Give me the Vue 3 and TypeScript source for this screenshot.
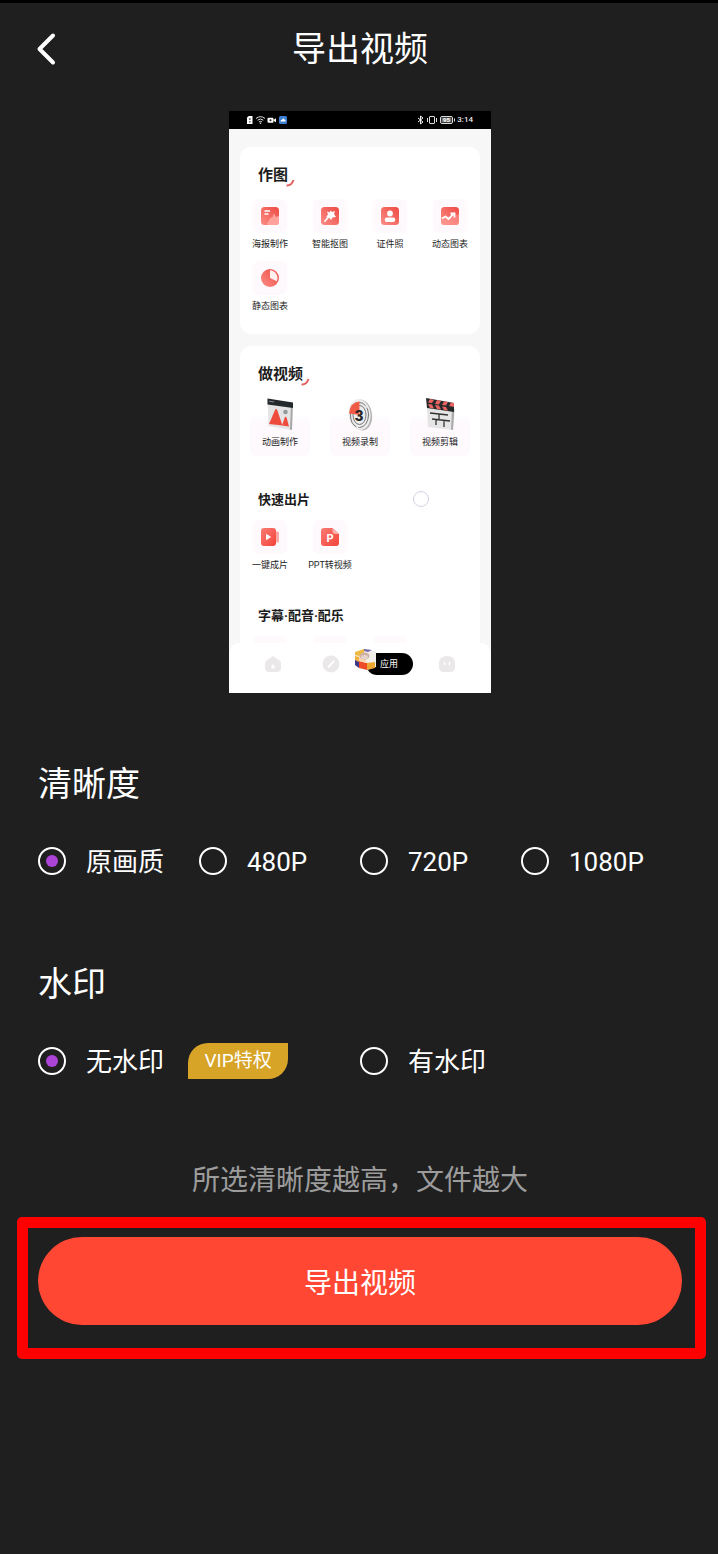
<script setup lang="ts">
import { ref } from 'vue'

interface Tool {
  name: string
  icon: string
}

const imageTools: Tool[] = [
  { name: '海报制作', icon: 'poster' },
  { name: '智能抠图', icon: 'cutout' },
  { name: '证件照', icon: 'portrait' },
  { name: '动态图表', icon: 'trend' },
  { name: '静态图表', icon: 'pie' },
]
const videoTools: Tool[] = [
  { name: '动画制作', icon: 'animation' },
  { name: '视频录制', icon: 'record' },
  { name: '视频剪辑', icon: 'clapper' },
]
const quickTools: Tool[] = [
  { name: '一键成片', icon: 'clip' },
  { name: 'PPT转视频', icon: 'ppt' },
]
const qualities: string[] = ['原画质', '480P', '720P', '1080P']

const quality = ref('原画质')
const watermark = ref('none')
</script>

<template>
  <div class="page">
    <header class="header">
      <button class="back" type="button" aria-label="返回">
        <svg width="22" height="34" viewBox="0 0 22 34">
          <path d="M17 3.500 3.500 17 17 30.500" fill="none" stroke="#fff" stroke-width="4" stroke-linecap="round" stroke-linejoin="round" />
        </svg>
      </button>
      <h1>导出视频</h1>
    </header>

    <div class="stage">
      <div class="preview">
        <div class="status">
          <svg class="status-left" width="42" height="10" viewBox="0 0 42 10">
            <path d="M1 2.500 2.800 1H6.500V9H1Z" fill="#fff" />
            <path d="M3.900 3V5M3.900 6V7.500" stroke="#222" stroke-width="1" />
            <g fill="none" stroke="#ddd" stroke-width="1">
              <path d="M10 3.500Q14.500 -.2 19 3.500M11.600 5.200Q14.500 2.800 17.400 5.200M13 6.900Q14.500 5.700 16 6.900" />
            </g>
            <circle cx="14.500" cy="8.200" r=".8" fill="#ddd" />
            <rect x="21.500" y="2.700" width="6" height="5" rx="1" fill="#fff" />
            <path d="M27.500 4.800 30 3.200V7.200L27.500 5.700Z" fill="#fff" />
            <circle cx="24.500" cy="5.200" r="1" fill="#222" />
            <rect x="33" y="1" width="8" height="8" rx="1.500" fill="#3d7fd0" />
            <path d="M34.500 6.500Q34.500 4.500 36 4.700 37.500 2.300 38.700 4.700 40 5 39.500 6.500Z" fill="#fff" />
          </svg>
          <span class="status-right">
            <svg width="39" height="10" viewBox="0 0 39 10">
              <path d="M1 3 6 7 3.500 9V1L6 3 1 7" fill="none" stroke="#eee" stroke-width="1" />
              <g fill="none" stroke="#ddd" stroke-width="1">
                <path d="M10.500 3V7M19.500 3V7" />
                <rect x="12.500" y="1.500" width="5" height="7" rx=".5" />
                <rect x="23.500" y="1.500" width="12" height="7" rx="1.500" />
              </g>
              <rect x="24.500" y="2.500" width="10" height="5" fill="#777" />
              <path d="M37.500 3.500V6.500" stroke="#ddd" stroke-width="1" />
              <text x="29.500" y="7.300" text-anchor="middle" font-size="6" font-weight="700" fill="#fff">95</text>
            </svg>
            <span>3:14</span>
          </span>
        </div>

        <div class="screen">
          <section class="card">
            <h3 class="card-title">
              作图<svg class="swoosh" width="10" height="8" viewBox="0 0 10 8"><path d="M1.500 6.500Q6.500 6.800 8.500 1" /></svg>
            </h3>
            <div class="tools">
              <div v-for="tool in imageTools" :key="tool.name" class="tool">
                <span class="tile">
                  <svg width="20" height="20" viewBox="0 0 20 20">
                    <defs>
                      <linearGradient :id="'g-' + tool.icon" x1="1" y1="0" x2="0" y2="1">
                        <stop offset="0" stop-color="#ee4a43" />
                        <stop offset="1" stop-color="#fb8e86" />
                      </linearGradient>
                    </defs>
                    <circle v-if="tool.icon === 'pie'" cx="10" cy="10" r="9" :fill="`url(#g-${tool.icon})`" />
                    <rect v-else x="1" y="1" width="18" height="18" rx="3.500" :fill="`url(#g-${tool.icon})`" />
                    <template v-if="tool.icon === 'poster'">
                      <path d="M4.500 5H10M4.500 8H8.500" stroke="#fff" stroke-width="1.300" />
                      <path d="M7 18 10.500 11.500 12 12 14 7.500 16 11 19 10V15.500Q19 19 15.500 19H8Z" fill="#ffa29c" />
                    </template>
                    <template v-else-if="tool.icon === 'cutout'">
                      <path d="M10.500 4.500 12 6 15 5 14 8 16 11 12.500 11.500 11 14 9 11.500 6 11 8 8.500 7 5.500 9.500 6.500Z" fill="#fff" />
                      <path d="M8.500 11 5 15" stroke="#fff" stroke-width="1.800" stroke-linecap="round" />
                    </template>
                    <template v-else-if="tool.icon === 'portrait'">
                      <circle cx="10" cy="7.500" r="2.900" fill="#fff" />
                      <rect x="4.700" y="11.500" width="10.600" height="4.500" rx="2.200" fill="#fff" />
                    </template>
                    <template v-else-if="tool.icon === 'trend'">
                      <path d="M1 11 5 13 8 10 11 12 19 8V15.500Q19 19 15.500 19H4.500Q1 19 1 15.500Z" fill="#ff9f99" opacity=".55" />
                      <path d="M2 12.500 5.500 10.500 8.500 13 13 8.500M10.500 7.500H14.500V11.500" fill="none" stroke="#fff" stroke-width="1.800" />
                    </template>
                    <path v-else d="M10 10V2.300A7.700 7.700 0 0 1 16.800 13.200Z" fill="#fff0f0" />
                  </svg>
                </span>
                <span class="tool-name">{{ tool.name }}</span>
              </div>
            </div>
          </section>

          <section class="card">
            <h3 class="card-title">
              做视频<svg class="swoosh" width="10" height="8" viewBox="0 0 10 8"><path d="M1.500 6.500Q6.500 6.800 8.500 1" /></svg>
            </h3>
            <div class="features">
              <div v-for="tool in videoTools" :key="tool.name" class="feature">
                <svg v-if="tool.icon === 'animation'" width="30" height="34" viewBox="0 0 30 34">
                  <path d="M2.500 1 27.500 5 26.500 32 3.500 28Z" fill="#e4e4e4" />
                  <path d="M26 5 28 5.300 27 32 25 31.500Z" fill="#a8a8a8" />
                  <path d="M2.500 .5 28 4.500V10L2.500 6.500Z" fill="#242a2c" />
                  <path d="M4 3.200 9 4" stroke="#889" stroke-width="1" />
                  <path d="M10.500 11Q11.500 10.500 12.200 12L17.500 27.500 4 26Z" fill="#ef4b3c" />
                  <path d="M20 19Q21 18 21.700 20L24 28.500 17 27.500Z" fill="#ef4b3c" />
                  <circle cx="20.500" cy="14" r="2.300" fill="#939a9c" />
                </svg>
                <svg v-else-if="tool.icon === 'record'" width="30" height="34" viewBox="0 0 30 34">
                  <ellipse cx="16.500" cy="17" rx="10.500" ry="15.500" fill="#b4b4b4" transform="rotate(-8 16.500 17)" />
                  <ellipse cx="14.500" cy="16.500" rx="11" ry="15.500" fill="#ececec" transform="rotate(-8 14.500 16.500)" />
                  <g fill="none" stroke="#777" stroke-width="1">
                    <ellipse cx="14.500" cy="17" rx="9" ry="12.500" stroke-dasharray="18 2" />
                    <ellipse cx="14.500" cy="17" rx="6.500" ry="9.500" />
                  </g>
                  <path d="M14.500 17V3.500Q5 4 4 15.500Z" fill="#f15a46" />
                  <text x="14" y="22.500" text-anchor="middle" font-size="15" font-weight="900" fill="#252525">3</text>
                </svg>
                <svg v-else width="30" height="34" viewBox="0 0 30 34">
                  <path d="M2 9 29 12 27 32 3 29Z" fill="#e5e5e5" />
                  <path d="M27 11H29.500L28 32 26 31.500Z" fill="#aaa" />
                  <path d="M1 0 29 5V14L2 10Z" fill="#26292a" />
                  <path d="M5 1 9 2 7 5 3 4.500ZM12 2 16 3 14 6.500 10 6ZM19 3.500 23 4 21 7.500 17 7ZM26 4.500 29 5V9L24 8ZM3 6 7 6.500 9 10.500 5 10ZM10 7 14 7.500 16 11.500 12 11ZM17 8.500 21 9 23 12.500 19 12Z" fill="#e96461" />
                  <path d="M5 15 23 17M7 21 25 23M14 16V22M11 22V27M19 23V29" stroke="#333" stroke-width="1.300" />
                </svg>
                <span class="tool-name">{{ tool.name }}</span>
              </div>
            </div>

            <h4 class="sub-title">快速出片</h4>
            <div class="tools">
              <div v-for="tool in quickTools" :key="tool.name" class="tool">
                <span class="tile">
                  <svg width="20" height="20" viewBox="0 0 20 20">
                    <defs>
                      <linearGradient :id="'q-' + tool.icon" x1="0" y1="0" x2="1" y2="1">
                        <stop offset="0" stop-color="#fa7b74" />
                        <stop offset="1" stop-color="#f3443a" />
                      </linearGradient>
                    </defs>
                    <template v-if="tool.icon === 'clip'">
                      <rect x="12" y="4.500" width="7" height="11" rx="1" fill="#fbaaa5" />
                      <rect x="1" y="1" width="15" height="18" rx="3" :fill="`url(#q-${tool.icon})`" />
                      <path d="M6.500 7.500 10.500 10 6.500 12.500Z" fill="#fff" stroke="#fff" stroke-linejoin="round" />
                    </template>
                    <template v-else>
                      <path d="M4 1H12.500L19 7V16Q19 19 16 19H4Q1 19 1 16V4Q1 1 4 1Z" :fill="`url(#q-${tool.icon})`" />
                      <path d="M12.500 1V4Q12.500 7 15.500 7H19Z" fill="#fbb0aa" />
                      <text x="10" y="14.500" text-anchor="middle" font-size="11" font-weight="700" fill="#fff">P</text>
                    </template>
                  </svg>
                </span>
                <span class="tool-name">{{ tool.name }}</span>
              </div>
            </div>

            <h4 class="sub-title">字幕·配音·配乐</h4>
            <div class="tools">
              <div v-for="n in 3" :key="n" class="tool"><span class="tile"></span></div>
            </div>
          </section>

          <span class="touch"></span>

          <nav class="tabs">
            <span class="tab">
              <svg width="18" height="18" viewBox="0 0 18 18">
                <path d="M9 1 16 6Q17 7 17 9V13Q17 17 13 17H5Q1 17 1 13V9Q1 7 2 6Z" fill="#ebe8ea" />
                <path d="M9 9 11 12 10 13.500H8L7 12Z" fill="#fff" />
              </svg>
            </span>
            <span class="tab">
              <svg width="18" height="18" viewBox="0 0 18 18">
                <circle cx="9" cy="9" r="8.500" fill="#ebe8ea" />
                <path d="M6.500 12 11.500 6.500" stroke="#fff" stroke-width="2" stroke-linecap="round" />
              </svg>
            </span>
            <span class="tab">
              <span class="tab-active">
                应用
                <svg class="cube" width="24" height="24" viewBox="0 0 24 24">
                  <path d="M1 4 12 1 22 4 22 19 13 22 2 18Z" fill="#f2eee9" />
                  <path d="M1 4 10 1 10 5 5 8 1 7Z" fill="#efba43" />
                  <path d="M10 1 18 2 14 4 10 3Z" fill="#7468ae" />
                  <path d="M1 8 5 9V14L1 12Z" fill="#f2af37" />
                  <path d="M1 12 5 14V20L1 17Z" fill="#403686" />
                  <path d="M5 13 13 15V22L5 20Z" fill="#ed4a28" />
                  <path d="M13 15 21 14V20L13 22Z" fill="#eda62f" />
                  <path d="M5 8 12 11V15L5 13Z" fill="#f9d8b4" />
                  <ellipse cx="10.500" cy="8" rx="5" ry="3.500" fill="#cfb1a4" />
                  <ellipse cx="10.500" cy="9" rx="3.500" ry="2" fill="#e6d3cb" />
                </svg>
              </span>
            </span>
            <span class="tab">
              <svg width="18" height="18" viewBox="0 0 18 18">
                <path d="M1 9Q1 1 9 1T17 9V12Q17 17 12 17H6Q1 17 1 12Z" fill="#ebe8ea" />
                <path d="M6.500 7.500V9.500M11.500 7.500V9.500" stroke="#fff" stroke-width="1.500" stroke-linecap="round" />
              </svg>
            </span>
          </nav>
        </div>
      </div>
    </div>

    <fieldset class="group first">
      <legend>清晰度</legend>
      <div class="options">
        <label v-for="q in qualities" :key="q" class="option">
          <input v-model="quality" type="radio" name="quality" :value="q" />
          <span class="option-name">{{ q }}</span>
        </label>
      </div>
    </fieldset>

    <fieldset class="group">
      <legend>水印</legend>
      <div class="options">
        <label class="option wide">
          <input v-model="watermark" type="radio" name="watermark" value="none" />
          <span class="option-name">无水印</span>
          <span class="vip">VIP特权</span>
        </label>
        <label class="option wide">
          <input v-model="watermark" type="radio" name="watermark" value="with" />
          <span class="option-name">有水印</span>
        </label>
      </div>
    </fieldset>

    <p class="hint">所选清晰度越高，文件越大</p>

    <div class="highlight">
      <button class="export" type="button">导出视频</button>
    </div>
  </div>
</template>

<style>
html,
body {
  margin: 0;
  background: #1f1f1f;
}
</style>

<style scoped>
.page {
  box-sizing: border-box;
  min-height: 100vh;
  border-top: 3px solid #000;
  background: #1f1f1f;
  color: #fff;
  font-family: Roboto, "Noto Sans CJK SC", sans-serif;
}

.header {
  display: grid;
  grid-template-columns: 60px 1fr 60px;
  align-items: center;
  height: 92px;
  padding: 0 16px 0 18px;
}

.header h1 {
  margin: 0;
  font-size: 34px;
  font-weight: 400;
  line-height: 40px;
  text-align: center;
}

.back {
  display: flex;
  padding: 0 0 0 18px;
  border: 0;
  background: none;
}

.stage {
  display: flex;
  justify-content: center;
  padding: 16px 36px 0 38px;
}

.preview {
  width: 262px;
  background: #f7f7f7;
  color: #1c1c1c;
}

.status {
  display: flex;
  justify-content: space-between;
  align-items: center;
  height: 18px;
  padding: 0 18px 0 17px;
  background: #000;
}

.status-right {
  display: flex;
  align-items: center;
  gap: 1px;
  color: #e8e8e8;
  font-size: 8px;
  font-weight: 500;
  line-height: 10px;
}

.screen {
  position: relative;
  display: flex;
  flex-direction: column;
  gap: 12px;
  box-sizing: border-box;
  height: 564px;
  padding: 18px 11px 0;
  overflow: hidden;
}

.card {
  flex: none;
  padding: 18px 0 21px;
  border-radius: 11px;
  background: #fff;
}

.card-title {
  display: flex;
  margin: 0 0 14px;
  padding-left: 18px;
  font-size: 15px;
  font-weight: 700;
  line-height: 20px;
}

.swoosh {
  align-self: flex-end;
  margin: 0 0 -2px -3px;
}

.swoosh path {
  fill: none;
  stroke: #e2605d;
  stroke-width: 2;
}

.sub-title {
  margin: 34px 0 10px;
  padding-left: 18px;
  font-size: 13px;
  font-weight: 700;
  line-height: 20px;
}

.tools {
  display: grid;
  grid-template-columns: repeat(4, 1fr);
  row-gap: 10px;
}

.tool {
  display: flex;
  flex-direction: column;
  align-items: center;
  gap: 4px;
}

.tile {
  display: flex;
  justify-content: center;
  align-items: center;
  width: 34px;
  height: 34px;
  border-radius: 6px;
  background: #fef9fc;
}

.tool-name {
  font-size: 9px;
  line-height: 14px;
  white-space: nowrap;
}

.features {
  display: grid;
  grid-template-columns: repeat(3, 1fr);
  justify-items: center;
}

.feature {
  display: flex;
  flex-direction: column;
  align-items: center;
  gap: 3px;
  width: 60px;
  padding-bottom: 7px;
  border-radius: 6px;
  background: linear-gradient(#fff 16px, #fdf9fc 24px);
}

.touch {
  position: absolute;
  top: 362px;
  left: 184px;
  width: 14px;
  height: 14px;
  border: 1px solid #d3d3e6;
  border-radius: 50%;
}

.tabs {
  position: absolute;
  right: 0;
  bottom: 0;
  left: 0;
  display: grid;
  grid-template-columns: repeat(4, 1fr);
  align-items: center;
  box-sizing: border-box;
  height: 50px;
  padding: 0 15px 8px;
  border-radius: 10px 10px 0 0;
  background: #fff;
}

.tab {
  display: flex;
  justify-content: center;
}

.tab-active {
  position: relative;
  width: 47px;
  border-radius: 11px;
  background: #000;
  color: #fff;
  font-size: 9px;
  line-height: 22px;
  text-align: center;
}

.cube {
  position: absolute;
  top: -5px;
  left: -12px;
}

.group {
  min-width: 0;
  margin: 85px 36px 0 38px;
  padding: 0;
  border: 0;
}

.group.first {
  margin-top: 71px;
}

.group legend {
  padding: 0;
  font-size: 34px;
  line-height: 40px;
}

.options {
  display: grid;
  grid-template-columns: repeat(4, 1fr);
  padding-top: 39px;
}

.option {
  display: flex;
  align-items: center;
  height: 36px;
  font-size: 26px;
  line-height: 36px;
  white-space: nowrap;
}

.option.wide {
  grid-column: span 2;
}

.option-name {
  padding-top: 2px;
}

.option input {
  display: grid;
  flex: none;
  place-content: center;
  box-sizing: border-box;
  width: 28px;
  height: 28px;
  margin: 0 20px 0 0;
  border: 2px solid #fff;
  border-radius: 50%;
  appearance: none;
}

.option input:checked::before {
  width: 12px;
  height: 12px;
  border-radius: 50%;
  background: #ae43d8;
  content: "";
}

.vip {
  width: 100px;
  margin-left: 24px;
  border-radius: 20px 0;
  background: #d7a428;
  font-size: 19px;
  text-align: center;
}

.hint {
  margin: 82px 36px 0 38px;
  color: #9c9c9c;
  font-size: 28px;
  line-height: 40px;
  text-align: center;
}

.highlight {
  margin: 16px 12px 0 17px;
  padding: 9px 13px 23px 10px;
  border: 11px solid #f00;
  border-radius: 5px;
}

.export {
  display: block;
  width: 100%;
  height: 88px;
  border: 0;
  border-radius: 44px;
  background: #ff4734;
  color: #fff;
  font-family: inherit;
  font-size: 28px;
}
</style>
